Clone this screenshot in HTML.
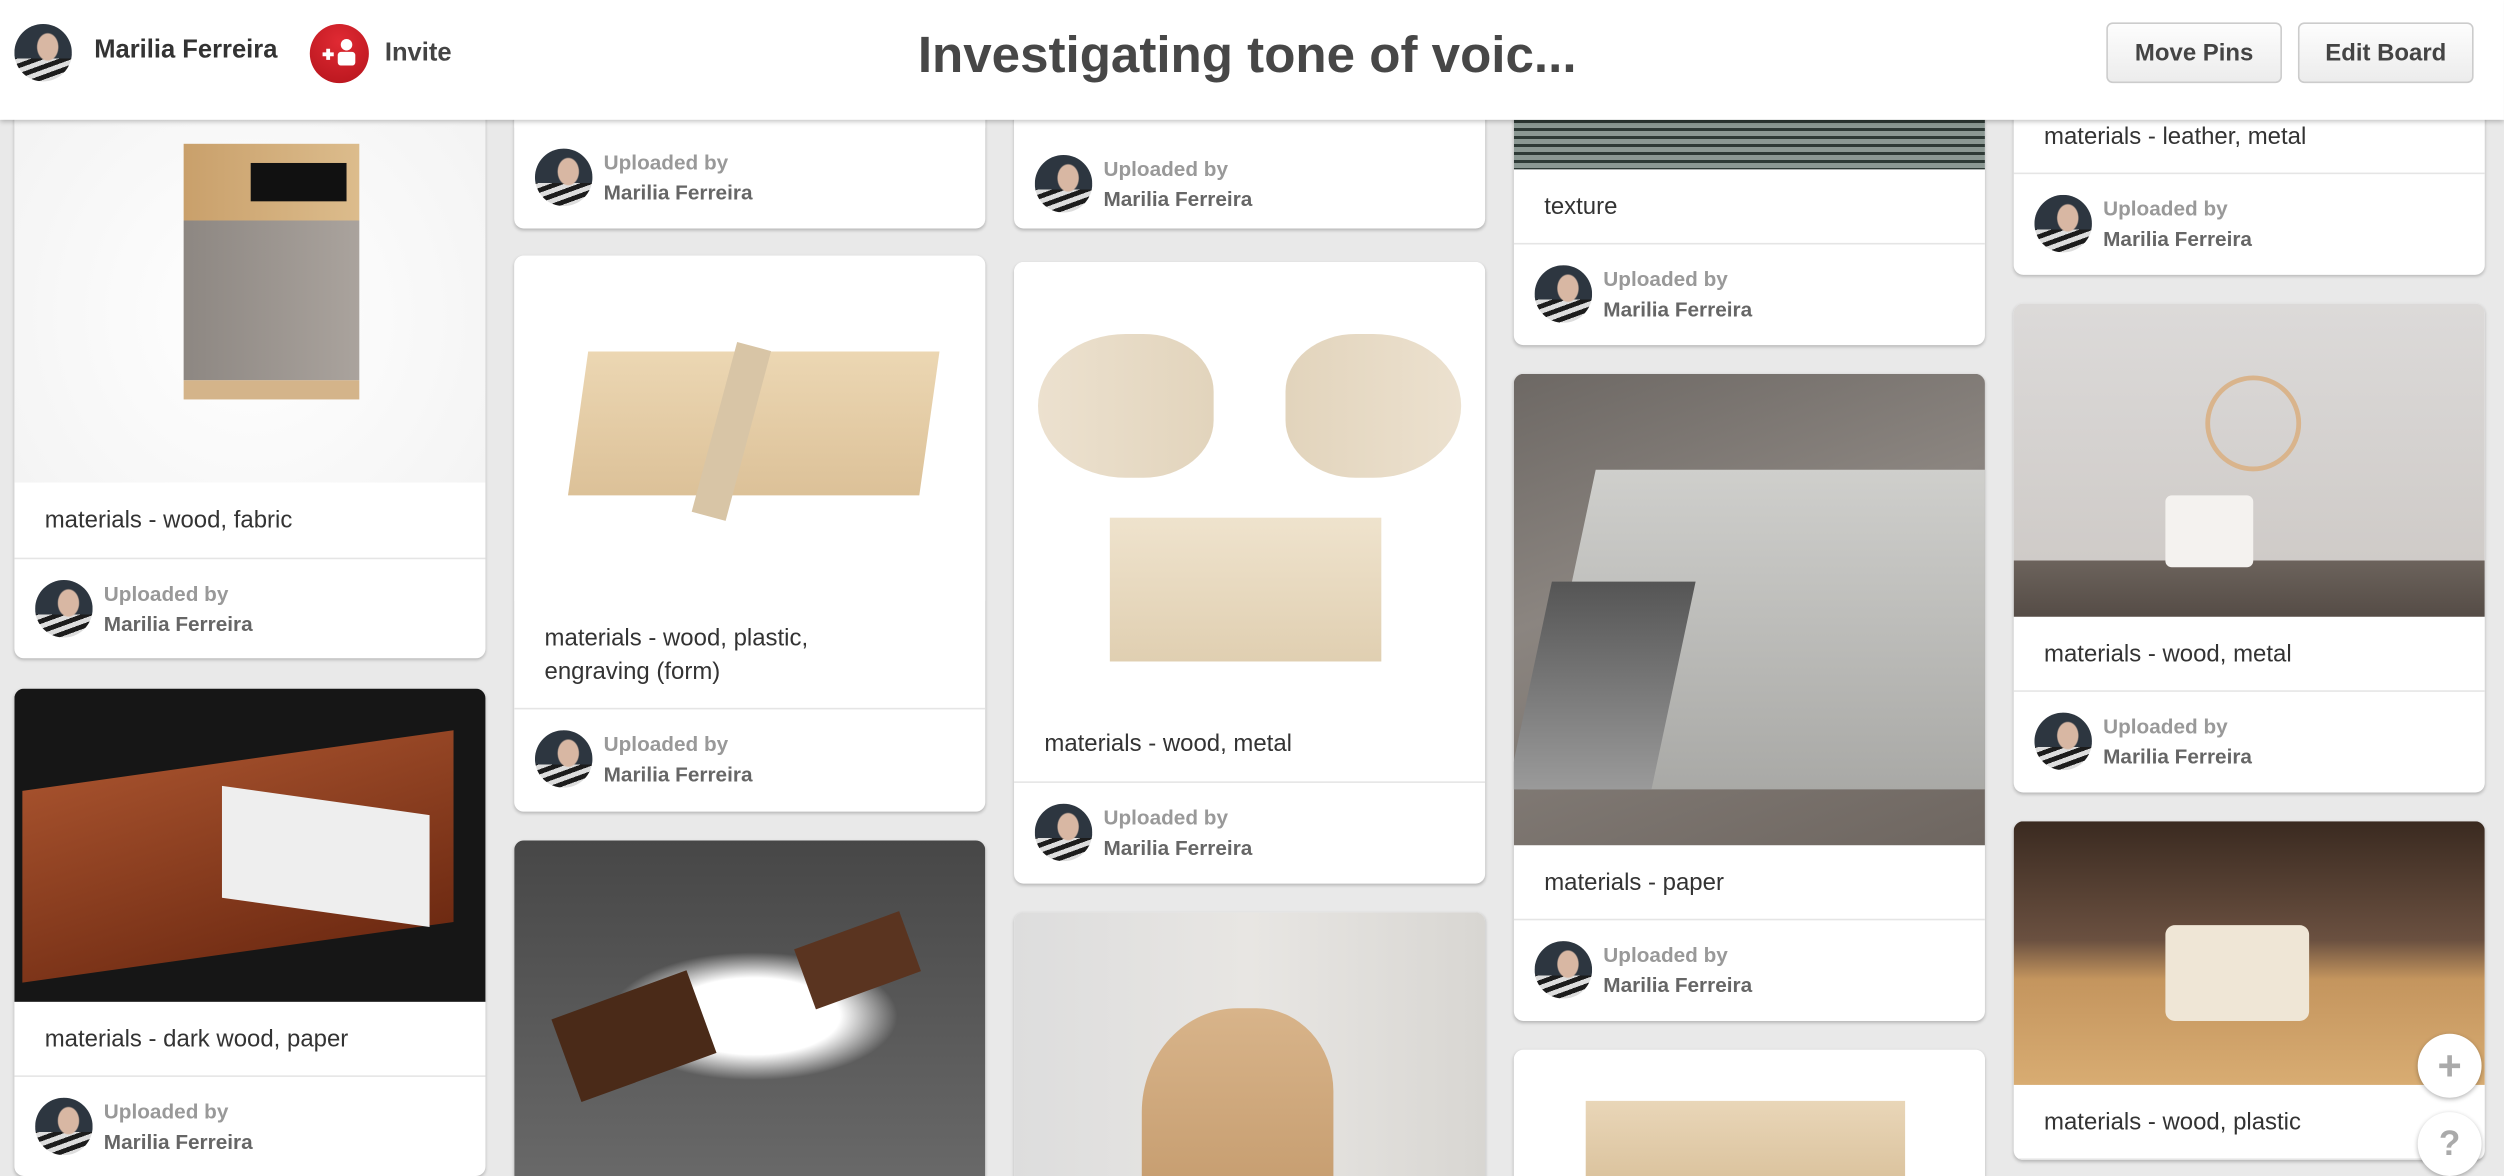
<!DOCTYPE html>
<html><head><meta charset="utf-8"><style>
*{box-sizing:border-box;margin:0;padding:0}
html,body{width:2504px;height:1176px;overflow:hidden;background:#e9e9e9;font-family:"Liberation Sans",Arial,sans-serif}
#w{position:absolute;left:0;top:0;width:1568px;height:736px;transform:scale(1.5969,1.5978);transform-origin:0 0;overflow:hidden}
.card{position:absolute;width:295px;background:#fff;border-radius:6px;overflow:hidden;box-shadow:0 1px 2px rgba(0,0,0,.22)}
.img{width:100%}
.cap{border-bottom:1px solid #e5e5e5;padding:0 19px;display:flex;align-items:center;font-size:15px;color:#333;line-height:21px}
.up{height:62px;position:relative}
.av{position:absolute;width:36px;height:36px;border-radius:50%;overflow:hidden;background:radial-gradient(ellipse 7px 9px at 58% 40%,#d8b7a3 0 90%,transparent 100%),linear-gradient(#2d3640 0 60%,transparent 60%),repeating-linear-gradient(160deg,#1c1c1c 0 3px,#ddd 3px 6px);}
.up .av{left:13px;top:13px}
.up .t1{position:absolute;left:56px;top:14px;font-size:13px;font-weight:bold;color:#999}
.up .t2{position:absolute;left:56px;top:33px;font-size:13px;font-weight:bold;color:#666}
#hdr{position:absolute;left:0;top:0;width:1568px;height:75px;background:#fff;box-shadow:0 1px 3px rgba(0,0,0,.25);z-index:5}
.btn{position:absolute;top:14px;height:38px;width:110px;border:1px solid #ccc;border-radius:4px;background:linear-gradient(#fdfdfd,#ececec);font-size:15px;font-weight:bold;color:#444;display:flex;align-items:center;justify-content:center}
.fab{position:absolute;left:1514px;width:40px;height:40px;border-radius:50%;background:#fff;box-shadow:0 1px 3px rgba(0,0,0,.3);color:#aaa;font-weight:bold;font-size:26px;display:flex;align-items:center;justify-content:center;z-index:6}
</style></head><body><div id="w">
<div id="hdr">
<div class="av" style="left:9px;top:15px"></div>
<div style="position:absolute;left:59px;top:23px;font-size:16px;font-weight:bold;color:#333">Marilia Ferreira</div>
<div style="position:absolute;left:194px;top:15px;width:37px;height:37px;border-radius:50%;background:radial-gradient(circle at 50% 30%,#e02a33,#b5141c)">
<svg width="37" height="37" viewBox="0 0 37 37"><path d="M8 19h7M11.5 15.5v7" stroke="#fff" stroke-width="2.4"/><circle cx="23" cy="13" r="3.6" fill="#fff"/><rect x="17.5" y="17.5" width="11" height="8.5" rx="2" fill="#fff"/></svg></div>
<div style="position:absolute;left:241px;top:25px;font-size:16px;font-weight:bold;color:#444">Invite</div>
<div style="position:absolute;left:0;width:1562px;top:16px;text-align:center;font-size:32px;font-weight:bold;color:#474747">Investigating tone of voic...</div>
<div class="btn" style="left:1319px">Move Pins</div>
<div class="btn" style="left:1439px">Edit Board</div>
</div>

<div class="card" style="left:9px;top:40px">
<div class="img" style="height:262px;background:radial-gradient(ellipse at 50% 60%,#fff,#f2f2f2);position:relative"><div style="position:absolute;left:106px;top:50px;width:110px;height:48px;background:linear-gradient(90deg,#c9a06b,#dcbc8c)"><div style="position:absolute;right:8px;top:12px;width:60px;height:24px;background:#111"></div></div><div style="position:absolute;left:106px;top:98px;width:110px;height:100px;background:linear-gradient(90deg,#8d8782,#aaa39d)"></div><div style="position:absolute;left:106px;top:198px;width:110px;height:12px;background:#d4b48a"></div></div>
<div class="cap" style="height:48px">materials - wood, fabric</div>
<div class="up"><div class="av"></div><div class="t1">Uploaded by</div><div class="t2">Marilia Ferreira</div></div></div>

<div class="card" style="left:9px;top:431px">
<div class="img" style="height:196px;background:#161616;position:relative"><div style="position:absolute;left:5px;top:45px;width:270px;height:120px;background:linear-gradient(170deg,#a4502c,#6e2a12);transform:skewY(-8deg)"></div><div style="position:absolute;left:130px;top:70px;width:130px;height:70px;background:#eee;transform:skewY(8deg)"></div></div>
<div class="cap" style="height:47px">materials - dark wood, paper</div>
<div class="up"><div class="av"></div><div class="t1">Uploaded by</div><div class="t2">Marilia Ferreira</div></div></div>

<div class="card" style="left:322px;top:40px">
<div class="img" style="height:40px;background:#fff"></div>
<div class="up" style="height:63px"><div class="av"></div><div class="t1">Uploaded by</div><div class="t2">Marilia Ferreira</div></div></div>

<div class="card" style="left:322px;top:160px">
<div class="img" style="height:216px;background:#fff;position:relative"><div style="position:absolute;left:40px;top:60px;width:220px;height:90px;background:linear-gradient(#ecd7b3,#dcc198);transform:skewX(-8deg)"></div><div style="position:absolute;left:125px;top:55px;width:22px;height:110px;background:#d8c5a6;transform:rotate(15deg)"></div></div>
<div class="cap" style="height:68px">materials - wood, plastic,<br>engraving (form)</div>
<div class="up" style="height:64px"><div class="av"></div><div class="t1">Uploaded by</div><div class="t2">Marilia Ferreira</div></div></div>

<div class="card" style="left:322px;top:526px">
<div class="img" style="height:220px;background:radial-gradient(ellipse 90px 40px at 150px 110px,#fff 0 60%,transparent 100%),linear-gradient(#474747,#6a6a6a);position:relative"><div style="position:absolute;left:30px;top:95px;width:90px;height:55px;background:#4a2a18;transform:rotate(-20deg)"></div><div style="position:absolute;left:180px;top:55px;width:70px;height:40px;background:#5a3420;transform:rotate(-20deg)"></div></div></div>

<div class="card" style="left:635px;top:40px">
<div class="img" style="height:44px;background:#fff"></div>
<div class="up" style="height:59px"><div class="av"></div><div class="t1">Uploaded by</div><div class="t2">Marilia Ferreira</div></div></div>

<div class="card" style="left:635px;top:164px">
<div class="img" style="height:278px;background:#fff;position:relative"><div style="position:absolute;left:15px;top:45px;width:110px;height:90px;border-radius:50% 40% 40% 50%;background:linear-gradient(90deg,#ece1cf,#e2d4bc)"></div><div style="position:absolute;left:170px;top:45px;width:110px;height:90px;border-radius:40% 50% 50% 40%;background:linear-gradient(90deg,#e2d4bc,#ece1cf)"></div><div style="position:absolute;left:60px;top:160px;width:170px;height:90px;background:linear-gradient(#efe3cd,#e0cfb1)"></div></div>
<div class="cap" style="height:48px">materials - wood, metal</div>
<div class="up" style="height:63px"><div class="av"></div><div class="t1">Uploaded by</div><div class="t2">Marilia Ferreira</div></div></div>

<div class="card" style="left:635px;top:571px">
<div class="img" style="height:180px;background:linear-gradient(90deg,#ddd 0,#e8e6e3 50%,#d8d6d2);position:relative"><div style="position:absolute;left:80px;top:60px;width:120px;height:130px;border-radius:50% 40% 0 0;background:linear-gradient(#d8b48a,#c49a6c)"></div></div></div>

<div class="card" style="left:948px;top:40px">
<div class="img" style="height:66px;background:repeating-linear-gradient(#2e3a36 0 2px,#8b9893 2px 5px)"></div>
<div class="cap" style="height:47px">texture</div>
<div class="up" style="height:63px"><div class="av"></div><div class="t1">Uploaded by</div><div class="t2">Marilia Ferreira</div></div></div>

<div class="card" style="left:948px;top:234px">
<div class="img" style="height:295px;background:linear-gradient(160deg,#6d6864,#8b8580 40%,#6e6660);position:relative"><div style="position:absolute;left:30px;top:60px;width:300px;height:200px;background:linear-gradient(#cfcfcc,#a9a9a6);transform:skewX(-12deg)"></div><div style="position:absolute;left:10px;top:130px;width:90px;height:130px;background:linear-gradient(#555,#9a9a9a);transform:skewX(-12deg)"></div></div>
<div class="cap" style="height:47px">materials - paper</div>
<div class="up" style="height:63px"><div class="av"></div><div class="t1">Uploaded by</div><div class="t2">Marilia Ferreira</div></div></div>

<div class="card" style="left:948px;top:657px">
<div class="img" style="height:90px;background:#fff;position:relative"><div style="position:absolute;left:45px;top:32px;width:200px;height:60px;background:linear-gradient(#e9d6b8,#d8bf98)"></div></div></div>

<div class="card" style="left:1261px;top:40px">
<div class="img" style="height:22px;background:#fff"></div>
<div class="cap" style="height:47px">materials - leather, metal</div>
<div class="up" style="height:63px"><div class="av"></div><div class="t1">Uploaded by</div><div class="t2">Marilia Ferreira</div></div></div>

<div class="card" style="left:1261px;top:190px">
<div class="img" style="height:196px;background:linear-gradient(#dcdad9 0,#cfcbc8 82%,#6c635c 82%,#554c46);position:relative"><div style="position:absolute;left:120px;top:45px;width:60px;height:60px;border-radius:50%;border:3px solid #d9b48c"></div><div style="position:absolute;left:95px;top:120px;width:55px;height:45px;background:#f4f2ef;border-radius:4px"></div></div>
<div class="cap" style="height:47px">materials - wood, metal</div>
<div class="up" style="height:63px"><div class="av"></div><div class="t1">Uploaded by</div><div class="t2">Marilia Ferreira</div></div></div>

<div class="card" style="left:1261px;top:514px">
<div class="img" style="height:165px;background:linear-gradient(#3a2a20 0,#6a5040 45%,#c4955e 60%,#d8ac72);position:relative"><div style="position:absolute;left:95px;top:65px;width:90px;height:60px;background:#efe6d6;border-radius:6px"></div></div>
<div class="cap" style="height:47px">materials - wood, plastic</div>
</div>

<div class="fab" style="top:647px">+</div>
<div class="fab" style="top:696px;font-size:22px">?</div>
</div></body></html>
